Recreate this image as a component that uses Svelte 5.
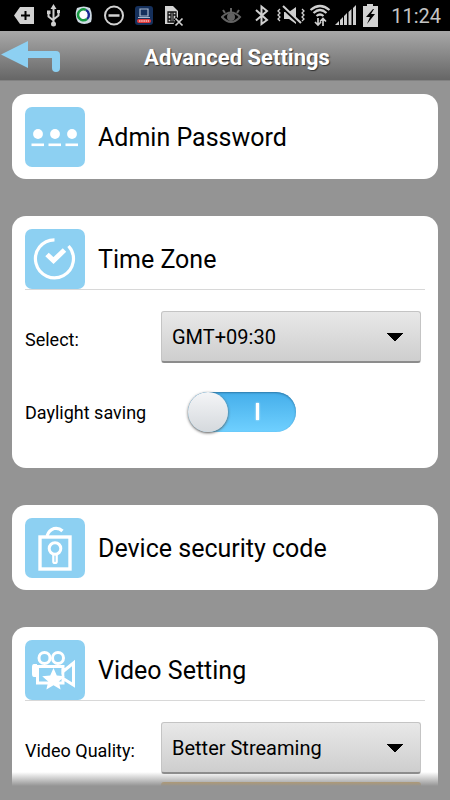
<script>
	let timeZone = "GMT+09:30";
	let daylight = true;
	let quality = "Better Streaming";

	const zones = ["GMT+08:00", "GMT+09:00", "GMT+09:30", "GMT+10:00"];
	const qualities = ["Better Streaming", "Better Quality"];
</script>

<div class="screen">
	<div class="status">
		<div class="notices">
			<svg width="20" height="24" viewBox="0 0 20 24">
				<path d="M0 11.5 6 3h14v17H6z" fill="#d2d2d2" />
				<path d="M7 11.5h9M11.500 7v9" stroke="#000" stroke-width="2" />
			</svg>
			<svg width="20" height="24" viewBox="0 0 20 24" fill="none" stroke="#cfcfcf" stroke-width="2">
				<path d="M9.500 4v16M4.500 9v3.500l5 4M14.500 8v3.500l-5 4" />
				<path d="M9.500 0 12.500 5h-6zM3 6.500h3.500V10H3zM13 6h3v3h-3z" fill="#cfcfcf" stroke="none" />
				<circle cx="9.500" cy="20" r="2.500" fill="#cfcfcf" stroke="none" />
			</svg>
			<svg width="20" height="24" viewBox="0 0 20 24" fill="none">
				<path d="M3 4q7-3 13 0 3 7 1 14-7 4-13 0-4-7-1-14z" fill="#cfdbe4" />
				<circle cx="9.500" cy="11" r="5.500" fill="#fff" />
				<path d="M4 11a5.500 5.500 0 0 1 8-5" stroke="#189a42" stroke-width="2.500" />
				<path d="M12 6a5.500 5.500 0 0 1 1 9" stroke="#172a91" stroke-width="2.500" />
				<path d="M13 15a5.500 5.500 0 0 1-9-4" stroke="#189a42" stroke-width="2.500" />
			</svg>
			<svg width="20" height="24" viewBox="0 0 20 24" fill="none" stroke="#d2d2d2">
				<circle cx="10" cy="11.500" r="9" stroke-width="2" />
				<path d="M4.500 11.500h11" stroke-width="2.500" />
			</svg>
			<svg width="20" height="24" viewBox="0 0 20 24">
				<rect x="1" y="2" width="18" height="19" rx="3" fill="#15305c" />
				<path d="M6 5h8v7H6zM4 13.500h12" fill="none" stroke="#a9b8ce" stroke-width="1.200" />
				<rect x="3" y="15" width="14" height="4" rx="2" fill="#e23a3a" />
				<path d="M5 17h10" stroke="#f0c4c4" stroke-width="1.500" stroke-dasharray="1.500 .7" />
			</svg>
			<svg width="20" height="24" viewBox="0 0 20 24" fill="none">
				<path d="M1 2h8l5 5v13H1z" fill="#d2d2d2" />
				<path d="M4 8h8v10H4zM4 11h3M4 15h3M9 11h3M7 8v10M9 8v10" stroke="#111" stroke-width="1.300" />
				<path d="m11 14 7 7m0-7-7 7" stroke="#000" stroke-width="4" />
				<path d="m11.500 14.500 7 7m0-7-7 7" stroke="#d2d2d2" stroke-width="1.700" />
			</svg>
		</div>
		<div class="signals">
			<svg width="24" height="24" viewBox="0 0 24 24" fill="none" stroke="#626262" stroke-width="2">
				<path d="M1 13q9-9 18 0-9 10-18 0z" />
				<circle cx="10" cy="13" r="3" fill="#626262" />
				<path d="M10 8V4M4 9 2 6M16 9l2-3" />
			</svg>
			<svg width="24" height="24" viewBox="0 0 24 24" fill="none" stroke="#cfcfcf" stroke-width="2">
				<path d="m7 6 11 10-5.500 4V2.500L18 7 7 16.500" />
			</svg>
			<svg width="28" height="24" viewBox="0 0 28 24" fill="none" stroke="#cfcfcf">
				<path d="M7 8h5l7-5v17l-7-5H7z" fill="#cfcfcf" stroke="none" />
				<path d="m5 3 18 17" stroke="#000" stroke-width="3" />
				<path d="m6 2 18 17" stroke-width="2" />
				<path d="m3 5-2 2 2 2-2 2 2 2-2 2 2 2M25 5l2 2-2 2 2 2-2 2 2 2-2 2" stroke-width="1.300" />
			</svg>
			<svg width="22" height="24" viewBox="0 0 22 24" fill="none" stroke="#cfcfcf">
				<path d="M1.500 6q9.500-8 19 0M4.500 9q6.500-6 13 0M7.500 12q3.500-3 7 0" stroke-width="2.200" />
				<path d="M9 14v7M6 18l3 3 3-3M14 22v-7M11 17.500l3-3 3 3" stroke-width="1.700" />
			</svg>
			<svg width="22" height="24" viewBox="0 0 22 24" fill="#cfcfcf">
				<path d="M0 21 4 17v4zM5 16l3-3v8H5zM9 12l3-3v12H9zM13.500 8l3-3v16h-3zM18 4l3-3v20h-3z" />
			</svg>
			<svg width="18" height="24" viewBox="0 0 18 24">
				<path d="M6 0h6v2h5v21H2V2h4z" fill="#d2d2d2" />
				<path d="M12 5 5 13h4l-3 7 8-10h-4l3-5z" fill="#000" />
			</svg>
			<span class="clock">11:24</span>
		</div>
	</div>

	<header>
		<button class="back" aria-label="Back">
			<svg width="60" height="32" viewBox="0 0 60 32">
				<path d="M1 14.500 28 1v10h28q4 0 4 4v13q0 4-4 4t-4-4V18H28v10z" fill="#8dd0f2" />
			</svg>
		</button>
		<h1>Advanced Settings</h1>
	</header>

	<main>
		<section>
			<div class="heading">
				<svg class="icon" width="60" height="60" viewBox="0 0 60 60">
					<rect width="60" height="60" rx="7" fill="#8dd0f2" />
					<g fill="#fff">
						<circle cx="13" cy="27" r="4.900" />
						<circle cx="30" cy="27" r="4.900" />
						<circle cx="47" cy="27" r="4.900" />
						<rect x="6.500" y="36.500" width="12.500" height="2.600" />
						<rect x="23.500" y="36.500" width="12.500" height="2.600" />
						<rect x="40.500" y="36.500" width="12.500" height="2.600" />
					</g>
				</svg>
				<h2>Admin Password</h2>
			</div>
		</section>

		<section class="open">
			<div class="heading">
				<svg class="icon" width="60" height="60" viewBox="0 0 60 60" fill="none" stroke="#fff">
					<rect width="60" height="60" rx="7" fill="#8dd0f2" stroke="none" />
					<path d="M29.500 10.800A19 19 0 1 0 43.500 17" stroke-width="3.200" />
					<path d="m22 25.500 6.500 6L39.500 21" stroke-width="5" />
				</svg>
				<h2>Time Zone</h2>
			</div>
			<div class="row">
				<label for="zone">Select:</label>
				<select id="zone" bind:value={timeZone}>
					{#each zones as zone}
						<option>{zone}</option>
					{/each}
				</select>
			</div>
			<div class="row switch">
				<label for="daylight">Daylight saving</label>
				<input id="daylight" class="toggle" type="checkbox" bind:checked={daylight} />
			</div>
		</section>

		<section>
			<div class="heading">
				<svg class="icon" width="60" height="60" viewBox="0 0 60 60" fill="none" stroke="#fff">
					<rect width="60" height="60" rx="7" fill="#8dd0f2" stroke="none" />
					<rect x="15" y="19" width="30" height="32" stroke-width="3.400" />
					<path d="M22 18q2-6 7-7.500 5-1 8.500 2.500" stroke-width="3.200" />
					<circle cx="30" cy="30.500" r="5.800" stroke-width="3" />
					<path d="M28.300 36v7.500q0 1.500 1.700 1.500t1.700-1.500V36" stroke-width="2.200" />
				</svg>
				<h2>Device security code</h2>
			</div>
		</section>

		<section class="open">
			<div class="heading">
				<svg class="icon" width="60" height="60" viewBox="0 0 60 60" fill="none" stroke="#fff">
					<rect width="60" height="60" rx="7" fill="#8dd0f2" stroke="none" />
					<circle cx="19.500" cy="18" r="5.500" stroke-width="3" />
					<circle cx="33" cy="18" r="5.500" stroke-width="3" />
					<path d="M12.500 26.500H38v5L48.500 23v22L38 38.500V43H12.500z" stroke-width="3" />
					<path d="M38 29v10" stroke-width="2.600" />
					<path d="M12 24H9q-2 0-2 3v7q0 3 2 3h3z" fill="#fff" stroke="none" />
					<path d="m28.500 28 3.300 7.400 8 .8-6 5.300 1.800 8-7.100-4.200-7.100 4.200 1.800-8-6-5.300 8-.8z" fill="#fff" stroke="none" />
				</svg>
				<h2>Video Setting</h2>
			</div>
			<div class="row">
				<label for="quality">Video Quality:</label>
				<select id="quality" bind:value={quality}>
					{#each qualities as item}
						<option>{item}</option>
					{/each}
				</select>
			</div>
			<div class="notice"></div>
		</section>
	</main>
</div>

<style>
	:global(body) {
		margin: 0;
		background: #949494;
	}
	.screen {
		display: flex;
		flex-direction: column;
		height: 100vh;
		box-sizing: border-box;
		padding-bottom: 14px;
		background: #949494;
		font-family: Roboto, sans-serif;
		color: #000;
	}
	.status {
		display: flex;
		justify-content: space-between;
		padding: 4px 9px 3px 14px;
		background: #000;
	}
	.status svg {
		display: block;
	}
	.notices {
		display: flex;
		gap: 10px;
	}
	.signals {
		display: flex;
		gap: 4px;
	}
	.clock {
		margin-left: 8px;
		font-size: 20px;
		line-height: 24px;
		color: #c4c4c4;
	}
	header {
		position: relative;
		display: flex;
		flex: none;
		align-items: center;
		justify-content: center;
		height: 50px;
		padding: 4px 0 0 24px;
		box-sizing: border-box;
		background: linear-gradient(#a8a8a8, #666);
		border-bottom: 1px solid #828282;
	}
	.back {
		position: absolute;
		left: 0;
		top: 9px;
		padding: 0;
		border: 0;
		background: none;
		cursor: pointer;
	}
	.back svg {
		display: block;
	}
	h1 {
		margin: 0;
		font-size: 22px;
		line-height: 32px;
		font-weight: 700;
		color: #fff;
		text-shadow: 1px 1px 1px #333;
	}
	main {
		position: relative;
		flex: 1;
		min-height: 0;
		display: flex;
		flex-direction: column;
		gap: 37px;
		padding: 13px 12px 0;
		overflow: hidden;
	}
	/* fade at the bottom of the scroll area */
	main::after {
		content: "";
		position: absolute;
		left: 0;
		right: 0;
		bottom: 0;
		height: 14px;
		background: linear-gradient(rgba(148, 148, 148, 0), #949494);
	}
	section {
		flex: none;
		padding: 13px 13px 12px;
		background: #fff;
		border-radius: 14px;
	}
	.heading {
		display: flex;
		align-items: center;
		gap: 13px;
	}
	.open .heading {
		border-bottom: 1px solid #d8d8d8;
	}
	.icon {
		display: block;
		flex: none;
	}
	h2 {
		margin: 0;
		padding-top: 2px;
		font-size: 25px;
		line-height: 36px;
		font-weight: 400;
	}
	.row {
		display: grid;
		grid-template-columns: 136px 1fr;
		align-items: center;
		min-height: 52px;
		margin-top: 21px;
		padding-right: 4px;
	}
	.switch {
		min-height: 60px;
		margin-top: 19px;
		padding-bottom: 14px;
	}
	label {
		padding-top: 6px;
		font-size: 18px;
		line-height: 24px;
		white-space: nowrap;
	}
	.switch label {
		padding-top: 2px;
	}
	select {
		appearance: none;
		width: 100%;
		height: 52px;
		padding: 0 36px 0 10px;
		border: 1px solid #c4c4c4;
		border-bottom: 2px solid #8c8c8c;
		border-radius: 3px;
		background:
			linear-gradient(to bottom right, #000 50%, transparent 51%) right 17px center / 8px 8px no-repeat,
			linear-gradient(to bottom left, #000 50%, transparent 51%) right 25px center / 8px 8px no-repeat,
			linear-gradient(#e8e8e8, #cecece);
		font-family: Roboto, sans-serif;
		font-size: 20px;
		color: #000;
	}
	.toggle {
		position: relative;
		appearance: none;
		width: 108px;
		height: 40px;
		margin: 0 0 0 27px;
		border-radius: 20px;
		background: linear-gradient(#45aeea, #6fd0ff);
		box-shadow: inset 0 1px 2px #2e79a8;
	}
	.toggle::before {
		content: "";
		position: absolute;
		left: 0;
		top: 0;
		width: 40px;
		height: 40px;
		border-radius: 50%;
		background: linear-gradient(#f4f5f7, #d5d9dd);
		box-shadow: 0 1px 3px #555;
	}
	.toggle::after {
		content: "";
		position: absolute;
		left: 68px;
		top: 11px;
		width: 3px;
		height: 17px;
		background: #fff;
		box-shadow: 0 0 2px #fff;
	}
	.toggle:not(:checked) {
		background: #bbb;
	}
	.toggle:not(:checked)::after {
		display: none;
	}
	.notice {
		height: 40px;
		margin: 8px 4px 0 136px;
		border-radius: 3px;
		background: #f3a82b;
	}
</style>
